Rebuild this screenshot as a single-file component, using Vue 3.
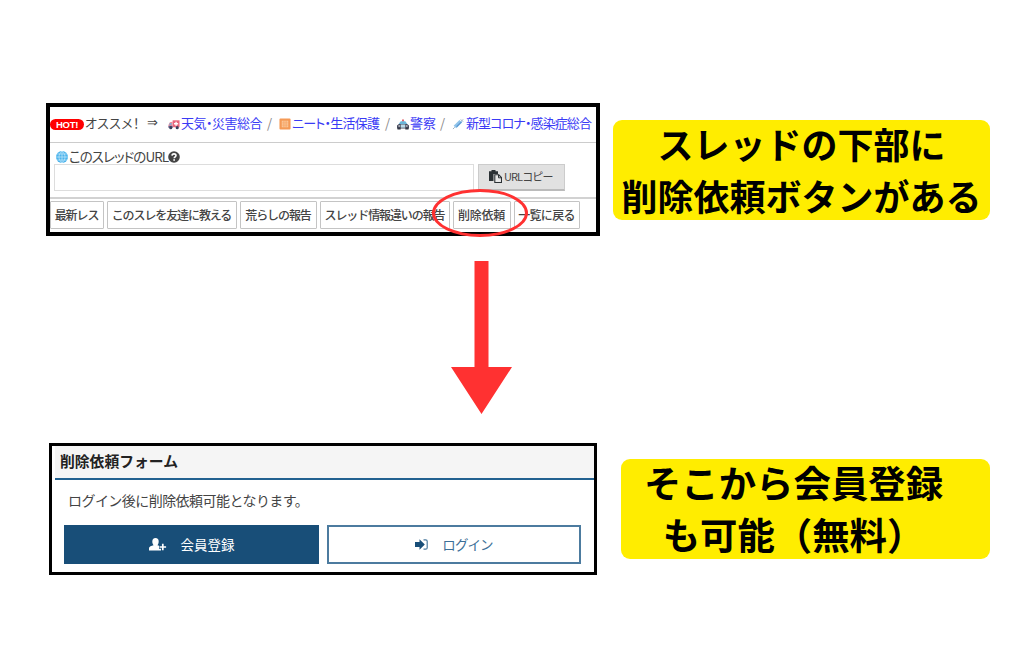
<script setup>
const topics = [
  { icon: 'truck', label: '天気・災害総合', name: 'weather' },
  { icon: 'note', label: 'ニート・生活保護', name: 'neet' },
  { icon: 'car', label: '警察', name: 'police' },
  { icon: 'syringe', label: '新型コロナ・感染症総合', name: 'corona' },
];

const actions = [
  { label: '最新レス', name: 'latest' },
  { label: 'このスレを友達に教える', name: 'share' },
  { label: '荒らしの報告', name: 'troll' },
  { label: 'スレッド情報違いの報告', name: 'wrong' },
  { label: '削除依頼', name: 'delete' },
  { label: '一覧に戻る', name: 'back' },
];
</script>

<template>
  <main class="page">
    <section class="step step-thread">
      <div class="panel thread">
        <div class="hot-row">
          <span class="hot">HOT!</span>
          <span class="recommend">オススメ！</span>
          <span class="implies">⇒</span>
          <template v-for="(topic, i) in topics" :key="topic.name">
            <span v-if="i > 0" class="slash">/</span>
            <a class="topic" :class="topic.name">
              <svg v-if="topic.icon === 'truck'" class="emoji" viewBox="0 0 13 13">
                <path d="M5 2.500h7.500v7.500H5z" fill="#e8657c" />
                <path d="M2 4.500L5 4v6.500H.5V7.500z" fill="#ee8b9c" />
                <path d="M1.800 5.800l2-.5v2H1.200z" fill="#6fb4dc" />
                <path d="M8 4h1.500v1.500H11V7H9.500v1.500H8V7H6.500V5.500H8z" fill="#fff" />
                <path d="M.5 8.500h4.500v2H.5z" fill="#5d6f9d" />
                <circle cx="3" cy="10.500" r="1.700" fill="#38405e" />
                <circle cx="10" cy="10.500" r="1.700" fill="#38405e" />
              </svg>
              <svg v-else-if="topic.icon === 'note'" class="emoji" viewBox="0 0 13 13">
                <rect x=".5" y=".5" width="12" height="12" rx="1" fill="#f59a56" />
                <path d="M3 3h7v7H3z" fill="#fbd3ac" />
                <path d="M3 4.500h7M3 6.500h7M3 8.500h7M5.300 3v7M7.700 3v7" stroke="#f59a56" stroke-width=".7" />
              </svg>
              <svg v-else-if="topic.icon === 'car'" class="emoji" viewBox="0 0 13 13">
                <path d="M5.500 1.500h2V4h-2z" fill="#e0525c" />
                <path d="M4 3.500h5l2.500 3.500h-10z" fill="#69b5d9" />
                <path d="M0 8l2-1.500h9L13 8v3.500H0z" fill="#474a5c" />
                <path d="M4 7h5v3.500H4z" fill="#b9d9e8" />
                <circle cx="2.300" cy="8.700" r=".8" fill="#fff" />
                <circle cx="10.700" cy="8.700" r=".8" fill="#fff" />
                <path d="M.5 10.500h3.500V12.500H.5zM9 10.500h3.500V12.500H9z" fill="#333644" />
              </svg>
              <svg v-else class="emoji" viewBox="0 0 13 13">
                <path d="M3.200 9.800L9.500 3.500" stroke="#8fc3ea" stroke-width="4" />
                <path d="M5 9.500L10.500 4" stroke="#5a97d2" stroke-width="1.300" />
                <path d="M1 12l2-2M9.500 1.500l2.500 2.500M10.500 3L12 1.500" stroke="#90a8c0" stroke-width="1" />
              </svg>
              <span class="topic-text">{{ topic.label }}</span>
            </a>
          </template>
        </div>

        <div class="url-area">
          <div class="url-label">
            <svg class="globe" viewBox="0 0 12 12">
              <circle cx="6" cy="6" r="6" fill="#4db4ec" />
              <path
                d="M6 0v12M0 6h12M1.200 3h9.600M1.200 9h9.600M6 0C2 3.500 2 8.500 6 12M6 0c4 3.500 4 8.500 0 12"
                fill="none" stroke="#c4e8fb" stroke-width=".7"
              />
            </svg>
            <span class="url-text">このスレッドのURL</span>
            <svg class="help" viewBox="0 0 12 12">
              <circle cx="6" cy="6" r="5.800" fill="#444" />
              <path d="M4 4.600C4.100 2.300 8 2.300 8 4.500 8 5.800 6.200 5.800 6.200 7.300" fill="none" stroke="#fff" stroke-width="1.600" />
              <path d="M5.300 8.200h1.700v1.600H5.300z" fill="#fff" />
            </svg>
          </div>
          <div class="url-line">
            <div class="url-input"></div>
            <div class="copy">
              <svg class="copy-icon" viewBox="0 0 13 13">
                <path d="M0 1.200h2.500V0h4v1.200H9V4H4.500v7H0z" fill="#2b3135" />
                <path d="M5.800 4.800h4l2.700 2.700v5H5.800z" fill="#e8e8e8" stroke="#2b3135" stroke-width="1.100" />
                <path d="M9.500 4.800v3h3" fill="none" stroke="#2b3135" stroke-width="1" />
              </svg>
              <span class="copy-text">URLコピー</span>
            </div>
          </div>
        </div>

        <div class="actions">
          <div v-for="action in actions" :key="action.name" class="action" :class="action.name">
            <span>{{ action.label }}</span>
          </div>
        </div>

        <!-- hand-drawn style marker around the delete button -->
        <div class="marker"></div>
      </div>

      <div class="note note-thread">
        <div>スレッドの下部に</div>
        <div>削除依頼ボタンがある</div>
      </div>
    </section>

    <svg class="arrow" viewBox="0 0 61 153">
      <path d="M23.500 0h14v106H61L30.500 153 0 106h23.500z" fill="#ff3131" />
    </svg>

    <section class="step step-form">
      <div class="panel form">
        <div class="form-title"><span>削除依頼フォーム</span></div>
        <div class="form-body">
          <p class="form-message">ログイン後に削除依頼可能となります。</p>
          <div class="form-buttons">
            <div class="form-button register">
              <svg class="user-icon" viewBox="0 0 18 13">
                <ellipse cx="6.500" cy="3.700" rx="3.200" ry="3.700" fill="#fff" />
                <path d="M0 12.500V10.500C0 8.300 2.500 8 4.500 7.200V6h4v1.200C10.500 8 13 8.300 13 10.500v2z" fill="#fff" />
                <path d="M13.800 5.200v7.800M10 9h8" stroke="#184e78" stroke-width="3.600" />
                <path d="M13.800 5.700v6.600M10.500 9h6.600" stroke="#fff" stroke-width="1.700" />
              </svg>
              <span>会員登録</span>
            </div>
            <div class="form-button login">
              <svg class="login-icon" viewBox="0 0 13 11">
                <path d="M0 3h4.500V.3L9.800 5.500 4.500 10.700V8H0z" fill="#184e78" />
                <path d="M8.500.8h2.200q1.500 0 1.500 1.500v6.400q0 1.500-1.500 1.500H8.500" fill="none" stroke="#4c7b9f" stroke-width="1.200" />
              </svg>
              <span>ログイン</span>
            </div>
          </div>
        </div>
      </div>

      <div class="note note-form">
        <div class="note-first">そこから会員登録</div>
        <div class="note-second">も可能（無料）</div>
      </div>
    </section>
  </main>
</template>

<style>
body {
  margin: 0;
  background: #fff;
}
</style>

<style scoped>
.page {
  box-sizing: border-box;
  width: 1024px;
  height: 653px;
  padding-top: 103px;
  overflow: hidden;
  background: #fff;
  font-family: "Noto Sans CJK JP", sans-serif;
  color: #444;
}

.page * {
  box-sizing: border-box;
}

.step {
  display: flex;
  align-items: flex-start;
}

svg {
  display: block;
  flex: none;
}

.panel {
  position: relative;
  flex: none;
  background: #fff;
  white-space: nowrap;
}

.step-thread {
  height: 158px;
  padding-left: 46px;
}

.thread {
  width: 554px;
  height: 133px;
  border: 4px solid #000;
}

/* recommended topics */
.hot-row {
  display: flex;
  align-items: center;
  height: 36px;
  padding-bottom: 3px;
  border-bottom: 1px solid #ccc;
  font-size: 13px;
  line-height: 20px;
  font-feature-settings: "palt";
}

.hot {
  flex: none;
  width: 34px;
  height: 11px;
  margin-top: 3px;
  border-radius: 6px;
  background: #f00;
  color: #fff;
  font: bold 9.500px/11px "Liberation Sans", sans-serif;
  letter-spacing: -0.300px;
  text-align: center;
}

.recommend {
  flex: none;
  width: 62px;
  padding-left: 1px;
  letter-spacing: 0.300px;
}

.implies {
  flex: none;
  width: 22px;
  padding-left: 1px;
  font-family: "DejaVu Sans", sans-serif;
}

.slash {
  flex: none;
  width: 17px;
  padding-left: 5px;
  color: #888;
}

.topic {
  display: flex;
  flex: none;
  align-items: center;
  color: #3a3af5;
}

.emoji {
  width: 12px;
  height: 12px;
  margin: 2px 1px 0 0;
}

.weather {
  width: 94px;
  letter-spacing: -0.500px;
}

.neet {
  width: 101px;
  letter-spacing: -0.750px;
}

.police {
  width: 38px;
}

.corona .emoji {
  margin-right: 2px;
}

.corona {
  letter-spacing: -0.900px;
}

/* url box */
.url-area {
  height: 56px;
  padding: 7px 0 0 4px;
  border-bottom: 2px solid #d2d2d2;
}

.url-label {
  display: flex;
  align-items: center;
  height: 14px;
}

.globe {
  width: 12px;
  height: 12px;
  margin: 0 1px 0 2px;
}

.url-text {
  width: 99px;
  margin-top: -2px;
  font-size: 13.500px;
  letter-spacing: -0.950px;
  font-feature-settings: "palt";
}

.help {
  width: 12px;
  height: 12px;
}

.url-line {
  display: flex;
  gap: 4px;
}

.url-input {
  width: 420px;
  height: 27px;
  border: 1px solid #ddd;
}

.copy {
  display: flex;
  align-items: center;
  width: 87px;
  height: 27px;
  padding: 0 0 2px 10px;
  border: 1px solid #ccc;
  border-bottom: 2px solid #bbb;
  background: #e1e1e1;
}

.copy-icon {
  width: 13px;
  height: 13px;
  margin-right: 2px;
}

.copy-text {
  font-size: 11px;
  letter-spacing: -0.900px;
}

/* bottom buttons */
.actions {
  display: flex;
  gap: 3px;
  padding-top: 2px;
}

.action {
  display: flex;
  align-items: center;
  justify-content: center;
  height: 28px;
  padding: 0 1px 2px 0;
  border: 1px solid #c4c4c4;
  border-radius: 1px;
  font-size: 12px;
  font-weight: 500;
  letter-spacing: -1.100px;
}

.latest {
  width: 54px;
}

.share {
  width: 130px;
}

.troll {
  width: 77px;
}

.wrong {
  width: 130px;
}

.delete {
  width: 58px;
  letter-spacing: -0.200px;
}

.back {
  width: 66px;
  letter-spacing: -0.700px;
}

.marker {
  position: absolute;
  left: 382px;
  top: 82px;
  width: 96px;
  height: 48px;
  border: 3px solid #ff3131;
  border-radius: 50%;
}

/* yellow captions */
.note {
  flex: none;
  height: 100px;
  border-radius: 9px;
  background: #ffed00;
  color: #000;
  font-weight: 700;
  text-align: center;
  white-space: nowrap;
}

.note > div {
  position: relative;
  top: -3px;
}

.note-thread {
  width: 377px;
  margin: 17px 0 0 13px;
  font-size: 36px;
  line-height: 52px;
}

.arrow {
  width: 61px;
  height: 153px;
  margin-left: 451px;
}

/* delete request form */
.step-form {
  padding: 29px 0 0 49px;
}

.form {
  width: 548px;
  height: 132px;
  border: 3px solid #000;
}

.form-title {
  display: flex;
  align-items: center;
  height: 34px;
  margin-left: 3px;
  padding: 0 0 3px 5px;
  border-bottom: 2px solid #226190;
  background: #f5f5f5;
  color: #222;
  font-size: 14.800px;
  font-weight: 700;
}

.form-body {
  padding: 12px 12px 0;
}

.form-message {
  height: 33px;
  margin: 0;
  padding-left: 4px;
  font-size: 14px;
  line-height: 16px;
  letter-spacing: -0.550px;
}

.form-buttons {
  display: flex;
  gap: 8px;
}

.form-button {
  display: flex;
  align-items: center;
  justify-content: center;
  width: 255px;
  height: 39px;
  font-size: 13.500px;
}

.form-button span {
  margin-top: -2px;
}

.register {
  gap: 14px;
  background: #184e78;
  color: #fff;
}

.login {
  width: 254px;
  gap: 14px;
  border: 2px solid #4c7b9f;
  color: #3c6f98;
  letter-spacing: -0.900px;
}

.user-icon {
  width: 18px;
  height: 13px;
}

.login-icon {
  width: 13px;
  height: 11px;
}

.note-form {
  width: 369px;
  margin: 16px 0 0 24px;
  font-size: 37.400px;
  line-height: 52px;
}

.note-first {
  padding-right: 24px;
}

.note-second {
  padding-right: 24px;
}
</style>
